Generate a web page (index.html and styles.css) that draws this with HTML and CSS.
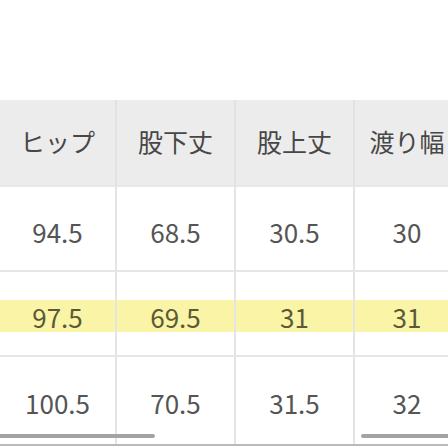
FILE: index.html
```html
<!DOCTYPE html>
<html lang="ja">
<head>
<meta charset="utf-8">
<link rel="stylesheet" href="styles.css">
</head>
<body>
<div class="page">
  <div class="spacer"></div>
  <div class="wrap">
    <div class="row head">
      <div class="cell">ヒップ</div>
      <div class="cell">股下丈</div>
      <div class="cell">股上丈</div>
      <div class="cell">渡り幅</div>
    </div>
    <div class="row r1">
      <div class="cell">94.5</div>
      <div class="cell">68.5</div>
      <div class="cell">30.5</div>
      <div class="cell">30</div>
    </div>
    <div class="row r2 mark">
      <div class="cell">97.5</div>
      <div class="cell">69.5</div>
      <div class="cell">31</div>
      <div class="cell">31</div>
    </div>
    <div class="row r3">
      <div class="cell">100.5</div>
      <div class="cell">70.5</div>
      <div class="cell">31.5</div>
      <div class="cell">32</div>
    </div>
    <div class="bar bar-left"></div>
    <div class="bar bar-right"></div>
  </div>
  <div class="bottom-line"></div>
</div>
</body>
</html>
```

FILE: styles.css
```css
html, body {
  margin: 0;
  padding: 0;
  background: #ffffff;
}
.page {
  width: 448px;
  height: 448px;
  overflow: hidden;
  font-family: "Noto Sans CJK JP", "Noto Sans", sans-serif;
}
.spacer {
  height: 100px;
}
.wrap {
  position: relative;
  width: 448px;
  overflow: hidden;
}
.row {
  display: grid;
  grid-template-columns: 117px 119px 119px 106px;
  width: 461px;
}
.cell {
  display: flex;
  align-items: center;
  justify-content: center;
  border-right: 2px solid #e4e4e4;
  border-bottom: 2px solid #e6e6e6;
  box-sizing: border-box;
  color: #555555;
  font-size: 26px;
}
.head .cell {
  height: 87px;
  background: #ececec;
  border-right-color: #e2e2e2;
  border-bottom-color: #e8e8e8;
  color: #474747;
  font-size: 25px;
  padding-bottom: 4px;
}
.r1 .cell {
  height: 85px;
  padding-top: 5px;
}
.r2 .cell {
  height: 85px;
  padding-top: 6px;
  color: #5b5938;
  background: linear-gradient(to bottom, transparent 28px, #f9f4a6 28px, #f9f4a6 60px, transparent 60px);
}
.r3 .cell {
  height: 87px;
  border-bottom: none;
  padding-top: 4px;
}
.bar {
  position: absolute;
  height: 4px;
  border-radius: 2px;
  background: #a3a3a3;
  top: 334px;
}
.bar-left {
  left: -4px;
  width: 159px;
}
.bar-right {
  left: 361px;
  width: 100px;
}
.bottom-line {
  height: 2px;
  background: #b9b9b9;
}
```
